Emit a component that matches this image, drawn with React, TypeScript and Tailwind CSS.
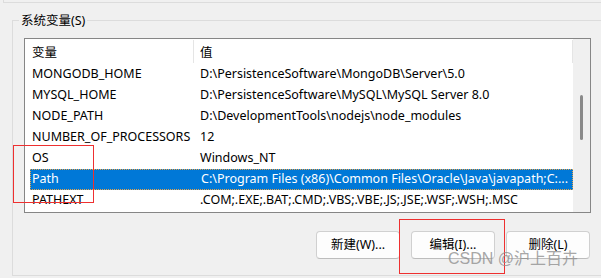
import React from "react";

const rows: [string, string][] = [
  ["MONGODB_HOME", "D:\\PersistenceSoftware\\MongoDB\\Server\\5.0"],
  ["MYSQL_HOME", "D:\\PersistenceSoftware\\MySQL\\MySQL Server 8.0"],
  ["NODE_PATH", "D:\\DevelopmentTools\\nodejs\\node_modules"],
  ["NUMBER_OF_PROCESSORS", "12"],
  ["OS", "Windows_NT"],
  ["Path", "C:\\Program Files (x86)\\Common Files\\Oracle\\Java\\javapath;C:..."],
  ["PATHEXT", ".COM;.EXE;.BAT;.CMD;.VBS;.VBE;.JS;.JSE;.WSF;.WSH;.MSC"],
];

export default function App() {
  return (
    <div
      className="relative w-[601px] h-[278px] overflow-hidden bg-[#f0f0f0] text-black"
      style={{ fontFamily: '"Noto Sans", "Noto Sans CJK SC", sans-serif' }}
    >
      <div className="ml-[3px] h-[3px] border-l border-b border-[#dcdcdc]" />
      <div className="relative mt-[17px] ml-[12px] w-[592px] h-[256px] border border-[#dcdcdc]">
        <span className="absolute top-[-9px] left-[6px] px-[2px] bg-[#f0f0f0] text-[12.5px] leading-[18px]">
          系统变量(S)
        </span>
        <div className="ml-[11px] mt-[17px] w-[567px] h-[175px] border border-[#868686] bg-white flex">
          <div className="w-[548px] flex flex-col">
            <div className="h-[25px] flex items-stretch text-[12.5px]">
              <div className="w-[169px] pl-[7px] pt-[4px] border-r border-[#e5e5e5] my-[1px]">变量</div>
              <div className="flex-1 pl-[6px] pt-[4px] border-r border-[#e5e5e5] my-[1px]">值</div>
            </div>
            {rows.map(([n, v]) => {
              const sel = n === "Path";
              return (
                <div
                  key={n}
                  className={
                    "ml-[5px] h-[21px] flex items-center text-[12.5px] whitespace-nowrap " +
                    (sel ? "bg-[#0078d7] text-white border border-dotted border-[#e7a34a]" : "")
                  }
                >
                  <div className={"w-[164px] " + (sel ? "pl-[1px]" : "pl-[2px]")}>{n}</div>
                  <div className="pl-[6px]">{v}</div>
                </div>
              );
            })}
          </div>
          <div className="w-[17px] bg-[#f0f0f0] pt-[56px] pl-[7px]">
            <div className="w-[3px] h-[45px] rounded-full bg-[#8a8a8a]" />
          </div>
        </div>
        <div className="flex pl-[303px] mt-[18px] gap-[11px] text-[12.5px]">
          <button className="w-[84px] h-[28px] rounded-[4px] border border-[#d0d0d0] border-b-[#bdbdbd] bg-[#fdfdfd]">新建(W)...</button>
          <button className="w-[84px] h-[28px] rounded-[4px] border border-[#d0d0d0] border-b-[#bdbdbd] bg-[#fdfdfd]">编辑(I)...</button>
          <button className="w-[84px] h-[28px] rounded-[4px] border border-[#d0d0d0] border-b-[#bdbdbd] bg-[#fdfdfd]">删除(L)</button>
        </div>
      </div>
      <div className="absolute left-[13px] top-[145px] w-[81px] h-[58px] border border-solid border-[#ee3030]" />
      <div className="absolute left-[399px] top-[219px] w-[106px] h-[55px] border border-solid border-[#ee3030]" />
      <div
        className="absolute left-[448px] top-[249px] text-[16px] leading-[20px] text-[#8f8f8f]/80 whitespace-nowrap"
        style={{ fontFamily: '"Liberation Sans", "Noto Sans CJK SC", sans-serif' }}
      >
        CSDN @沪上百卉
      </div>
    </div>
  );
}
